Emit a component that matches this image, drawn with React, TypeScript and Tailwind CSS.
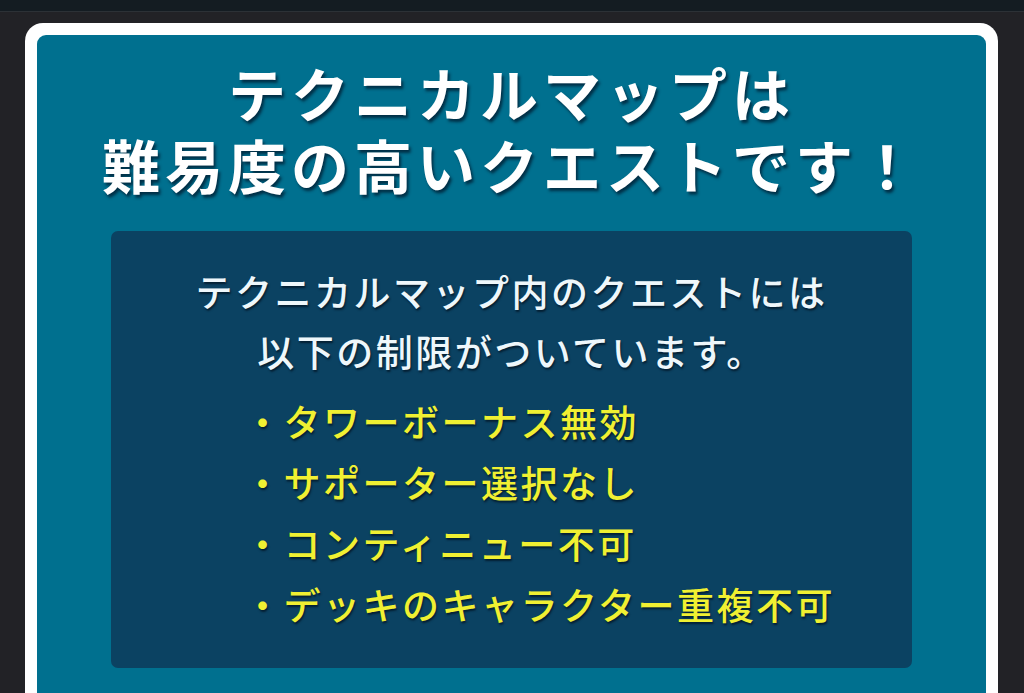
const titleLines = ['テクニカルマップは', '難易度の高いクエストです！'];

const rules = [
  'タワーボーナス無効',
  'サポーター選択なし',
  'コンティニュー不可',
  'デッキのキャラクター重複不可',
];

const jp = { fontFamily: '"Noto Sans CJK JP", "Noto Sans", sans-serif' };

const App = () => {
  return (
    <div className="w-[1024px] h-[693px] overflow-hidden bg-[#222226]" style={jp}>
      {/* game screen strip behind the dialog */}
      <div className="h-[12px] bg-[#141c22] border-b border-[#2c3136]" />

      <div className="ml-[25px] mr-[26px] mt-[11px] bg-white rounded-t-[18px] px-[12px] pt-[12px] h-[700px]">
        <div className="bg-[#00708f] rounded-[9px] h-full pt-[21px]">
          <h1 className="text-center whitespace-nowrap text-white font-bold text-[58px] leading-[72px] tracking-[5px] [text-shadow:2px_3px_3px_rgba(0,25,45,0.75)]">
            {titleLines.map((line) => (
              <div key={line}>{line}</div>
            ))}
          </h1>

          <div className="mx-[74px] mt-[31px] bg-[#0b4262] rounded-[7px] pt-[30px] pb-[33px]">
            <p className="text-center font-medium text-[#eef7fb] text-[37px] leading-[60px] tracking-[2.5px] [text-shadow:1px_2px_2px_rgba(0,15,30,0.7)]">
              テクニカルマップ内のクエストには
              <br />
              以下の制限がついています。
            </p>

            <ul className="mt-[10px] pl-[133px] font-medium text-[#f0f032] text-[37px] leading-[61px] tracking-[2.5px] [text-shadow:1px_2px_2px_rgba(0,15,30,0.7)]">
              {rules.map((rule) => (
                <li key={rule}>・{rule}</li>
              ))}
            </ul>
          </div>
        </div>
      </div>
    </div>
  );
};

export default App;
